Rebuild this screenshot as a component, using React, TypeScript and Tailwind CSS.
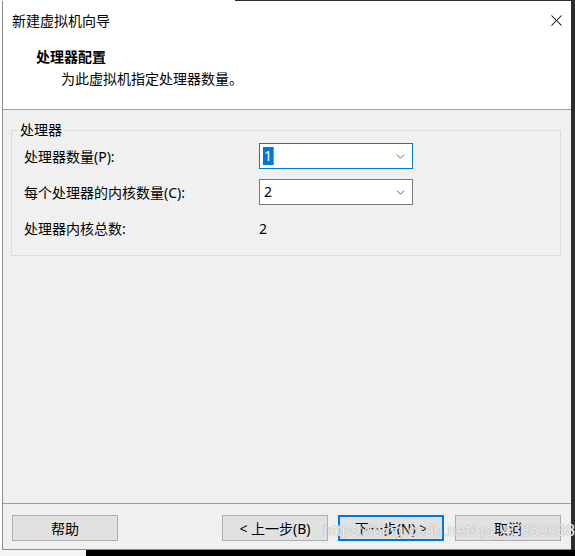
import { ChevronDown, X } from 'lucide-react';

const font = { fontFamily: '"Segoe UI", "Noto Sans", "Noto Sans CJK SC", sans-serif' };

const Combo = ({ value, focused }: { value: string; focused?: boolean }) => (
  <div
    className={`flex items-center justify-between w-[154px] h-[26px] bg-white pl-[3px] pr-[5px] border ${
      focused ? 'border-[#0078d7]' : 'border-[#7a7a7a]'
    }`}
  >
    {focused ? (
      <span className="flex items-center h-[18px]">
        <span className="bg-[#0078d7] text-white px-[1px] leading-[18px]">{value}</span>
        <span className="w-[1px] h-[18px] bg-[#f58220]" />
      </span>
    ) : (
      <span className="leading-[18px] pl-[1px]">{value}</span>
    )}
    <ChevronDown size={13} strokeWidth={1.5} className="text-[#404040]" />
  </div>
);

const Button = ({ label, primary }: { label: string; primary?: boolean }) => (
  <button
    className={`w-[106px] h-[26px] bg-[#e1e1e1] text-[14px] text-black ${
      primary ? 'border-2 border-[#0078d7]' : 'border border-[#adadad]'
    }`}
  >
    {label}
  </button>
);

export default function App() {
  return (
    <div className="w-[575px] h-[556px] flex flex-col bg-white text-[14px] text-black" style={font}>
      <div className="flex h-[1px]">
        <div className="w-[235px] bg-white" />
        <div className="flex-1 bg-[#2d2d2d]" />
      </div>
      <div className="flex flex-1">
        <div className="w-[2px] bg-white" />
        <div className="relative w-[569px] flex flex-col border-l border-b border-[#8c8c8c] bg-[#f0f0f0]">
          {/* title + header */}
          <div className="bg-white h-[109px] border-b border-[#a0a0a0] flex flex-col">
            <div className="flex items-center justify-between h-[38px] pl-[9px] pr-[5px]">
              <span>新建虚拟机向导</span>
              <X size={19} strokeWidth={1.3} className="text-black" />
            </div>
            <div className="pl-[33px] pt-[7px] font-bold leading-[22px]">处理器配置</div>
            <div className="pl-[58px] leading-[22px]">为此虚拟机指定处理器数量。</div>
          </div>

          {/* body */}
          <div className="flex-1 px-[8px] pt-[12px]">
            <fieldset className="border border-[#dcdcdc] w-[550px] h-[134px] pl-[12px]">
              <legend className="-ml-[6px] px-[2px] leading-[16px]">处理器</legend>
              <div className="flex flex-col pt-[5px]">
                <div className="flex items-center h-[26px]">
                  <span className="w-[235px]">处理器数量(P):</span>
                  <Combo value="1" focused />
                </div>
                <div className="flex items-center h-[26px] mt-[10px]">
                  <span className="w-[235px]">每个处理器的内核数量(C):</span>
                  <Combo value="2" />
                </div>
                <div className="flex items-center h-[26px] mt-[10px]">
                  <span className="w-[235px]">处理器内核总数:</span>
                  <span>2</span>
                </div>
              </div>
            </fieldset>
          </div>

          {/* footer */}
          <div className="h-[46px] border-t border-[#a0a0a0] flex items-start pt-[11px] pl-[9px] pr-[10px]">
            <Button label="帮助" />
            <div className="flex-1" />
            <div className="flex gap-[10px]">
              <Button label="< 上一步(B)" />
              <Button label="下一步(N) >" primary />
              <div className="ml-[1px]">
                <Button label="取消" />
              </div>
            </div>
          </div>

          <span
            className="absolute left-[320px] top-[518px] text-[16px] text-white/85 tracking-[0.2px] pointer-events-none"
            style={{ fontFamily: '"Liberation Sans", sans-serif', textShadow: '0 0 1px #7a7a7a' }}
          >
            https://blog.csdn.net/qq_43869038
          </span>
        </div>
        <div className="flex-1 bg-[#2d2d2d]" />
      </div>
      <div className="flex h-[6px]">
        <div className="w-[86px] bg-[#f4f4f4]" />
        <div className="flex-1 bg-black" />
      </div>
    </div>
  );
}
